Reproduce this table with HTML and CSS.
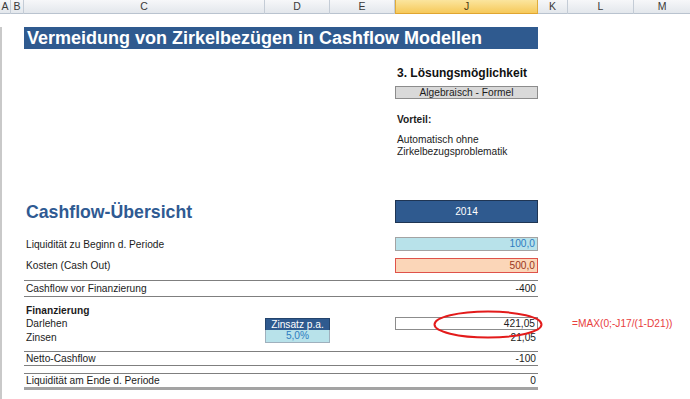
FILE: index.html
```html
<!DOCTYPE html>
<html lang="de">
<head>
<meta charset="utf-8">
<title>Vermeidung von Zirkelbezügen</title>
<link rel="stylesheet" href="styles.css">
</head>
<body>
<div class="colhead">
  <div class="ch w-a">A</div>
  <div class="ch w-b">B</div>
  <div class="ch w-c">C</div>
  <div class="ch w-d">D</div>
  <div class="ch w-e">E</div>
  <div class="ch w-j sel">J</div>
  <div class="ch w-k">K</div>
  <div class="ch w-l">L</div>
  <div class="ch w-m">M</div>
</div>
<div class="sheet">
  <div class="title">Vermeidung von Zirkelbezügen in Cashflow Modellen</div>

  <div class="solution">
    <div class="sol-head">3. Lösungsmöglichkeit</div>
    <div class="sol-box">Algebraisch - Formel</div>
    <div class="sol-label">Vorteil:</div>
    <div class="sol-text">Automatisch ohne<br>Zirkelbezugsproblematik</div>
  </div>

  <div class="row r-head">
    <div class="c-c heading">Cashflow-Übersicht</div>
    <div class="c-j year">2014</div>
  </div>

  <div class="row r-in">
    <div class="c-c">Liquidität zu Beginn d. Periode</div>
    <div class="c-j val in">100,0</div>
  </div>

  <div class="row r-out">
    <div class="c-c">Kosten (Cash Out)</div>
    <div class="c-j val out">500,0</div>
  </div>

  <div class="row r-lined r-cf">
    <div class="c-c">Cashflow vor Finanzierung</div>
    <div class="c-j num">-400</div>
  </div>

  <div class="row r-fin">
    <div class="c-c bold">Finanzierung</div>
  </div>

  <div class="row r-darl">
    <div class="c-c">Darlehen</div>
    <div class="c-d rate-head">Zinsatz p.a.</div>
    <div class="c-j val loan">421,05
      <svg class="ring" width="110" height="29" viewBox="0 0 110 29"><ellipse cx="55" cy="14.5" rx="53.5" ry="13" fill="none" stroke="#e31b1b" stroke-width="2"/></svg>
    </div>
    <div class="c-k formula">=MAX(0;-J17/(1-D21))</div>
  </div>

  <div class="row r-zins">
    <div class="c-c">Zinsen</div>
    <div class="c-d rate-val">5,0%</div>
    <div class="c-j num">21,05</div>
  </div>

  <div class="row r-lined r-netto">
    <div class="c-c">Netto-Cashflow</div>
    <div class="c-j num">-100</div>
  </div>

  <div class="row r-lined r-end">
    <div class="c-c">Liquidität am Ende d. Periode</div>
    <div class="c-j num">0</div>
  </div>
</div>
</body>
</html>
```

FILE: styles.css
```css
* { box-sizing: border-box; }
html, body {
  margin: 0;
  padding: 0;
  background: #ffffff;
  width: 690px;
  height: 399px;
  overflow: hidden;
  font-family: "Liberation Sans", Arial, sans-serif;
  font-size: 10.2px;
  color: #1c1c1c;
}

.colhead {
  display: flex;
  height: 14px;
  background: linear-gradient(#f6f7f9, #e3e7ec);
  border-bottom: 1px solid #b9c3cf;
}
.ch {
  height: 14px;
  line-height: 13px;
  text-align: center;
  font-size: 10.5px;
  color: #3a3a3a;
  border-right: 1px solid #c4ccd6;
}
.ch.sel {
  background: linear-gradient(#fbe59e, #f6c95a);
  border-right: 1px solid #e0ac3a;
  border-left: 1px solid #e0ac3a;
  border-bottom: 1px solid #e0a530;
  color: #4a3a10;
}
.w-a { width: 11px; }
.w-b { width: 13px; }
.w-c { width: 241px; }
.w-d { width: 65px; }
.w-e { width: 65px; }
.w-j { width: 143px; }
.w-k { width: 30px; }
.w-l { width: 66px; }
.w-m { flex: 1; border-right: none; }

.sheet {
  height: 385px;
  padding-left: 22px;
  border-left: 2px solid #c9c9c9;
}

.title {
  margin-top: 13px;
  width: 514px;
  height: 22px;
  line-height: 22px;
  padding-left: 3px;
  background: #2f5a8f;
  color: #ffffff;
  font-weight: bold;
  font-size: 18px;
}

.solution {
  margin-left: 371px;
  width: 143px;
}
.sol-head {
  margin-top: 17px;
  height: 14px;
  line-height: 14px;
  padding-left: 2px;
  font-weight: bold;
  font-size: 12px;
  color: #111;
}
.sol-box {
  margin-top: 6px;
  height: 13px;
  line-height: 11px;
  text-align: center;
  background: #d9d9d9;
  border: 1px solid #8c8c8c;
  color: #1c1c1c;
}
.sol-label {
  margin-top: 14px;
  height: 14px;
  line-height: 14px;
  padding-left: 2px;
  font-weight: bold;
}
.sol-text {
  margin-top: 7px;
  padding-left: 2px;
  line-height: 12px;
}

.row {
  display: grid;
  grid-template-columns: 241px 65px 65px 143px 120px;
  grid-template-areas: "c d e j k";
  width: 634px;
  height: 14px;
  align-items: center;
}
.c-c { grid-area: c; padding-left: 2px; white-space: nowrap; }
.c-d { grid-area: d; }
.c-j { grid-area: j; }
.c-k { grid-area: k; }

.bold { font-weight: bold; }

.r-head {
  margin-top: 42px;
  height: 23px;
}
.heading {
  font-size: 17.7px;
  font-weight: bold;
  color: #2f5a92;
  padding-left: 2px;
  padding-top: 1px;
}
.year {
  height: 23px;
  line-height: 21px;
  text-align: center;
  background: #2f5a8f;
  border: 1px solid #1f3553;
  color: #ffffff;
}

.val {
  height: 14px;
  line-height: 12px;
  text-align: right;
  padding-right: 2px;
  border: 1px solid #9a9a9a;
}
.r-in { margin-top: 14px; }
.in {
  background: #b8e2ea;
  border-color: #a3a3a3;
  color: #2e7cc1;
}
.r-out { margin-top: 7px; height: 15px; }
.out {
  height: 15px;
  line-height: 13px;
  background: #fbd6b8;
  border-color: #df5249;
  color: #9a351c;
}

.num {
  text-align: right;
  padding-right: 2px;
}

.r-lined {
  grid-template-columns: 241px 65px 65px 143px;
  width: 514px;
  border-top: 1px solid #7f7f7f;
  border-bottom: 1px solid #7f7f7f;
}
.r-cf {
  margin-top: 7px;
  height: 17px;
}
.r-fin {
  margin-top: 6px;
}
.r-darl {
  height: 13px;
  align-items: stretch;
}
.r-darl .c-c { align-self: center; }
.rate-head {
  margin-top: 1px;
  height: 12px;
  line-height: 11px;
  text-align: center;
  background: #2f5a8f;
  color: #ffffff;
  border: 1px solid #24446c;
  border-bottom: none;
}
.loan {
  position: relative;
  height: 13px;
  line-height: 11px;
  background: #ffffff;
  border-color: #8c8c8c;
}
.ring {
  position: absolute;
  left: 37px;
  top: -8px;
  overflow: visible;
}
.formula {
  padding-left: 34px;
  color: #e8403e;
  white-space: nowrap;
  align-self: center;
}
.r-zins {
  height: 14px;
  align-items: stretch;
}
.r-zins .c-c, .r-zins .num { align-self: center; }
.rate-val {
  height: 13px;
  line-height: 12px;
  text-align: center;
  background: #b8e2ea;
  color: #2e7cc1;
  border: 1px solid #9fb0bd;
  border-top: none;
}

.r-netto {
  margin-top: 7px;
  height: 15px;
}
.r-end {
  margin-top: 7px;
  height: 17px;
  border-bottom: 3px solid #a3a3a3;
}
```
